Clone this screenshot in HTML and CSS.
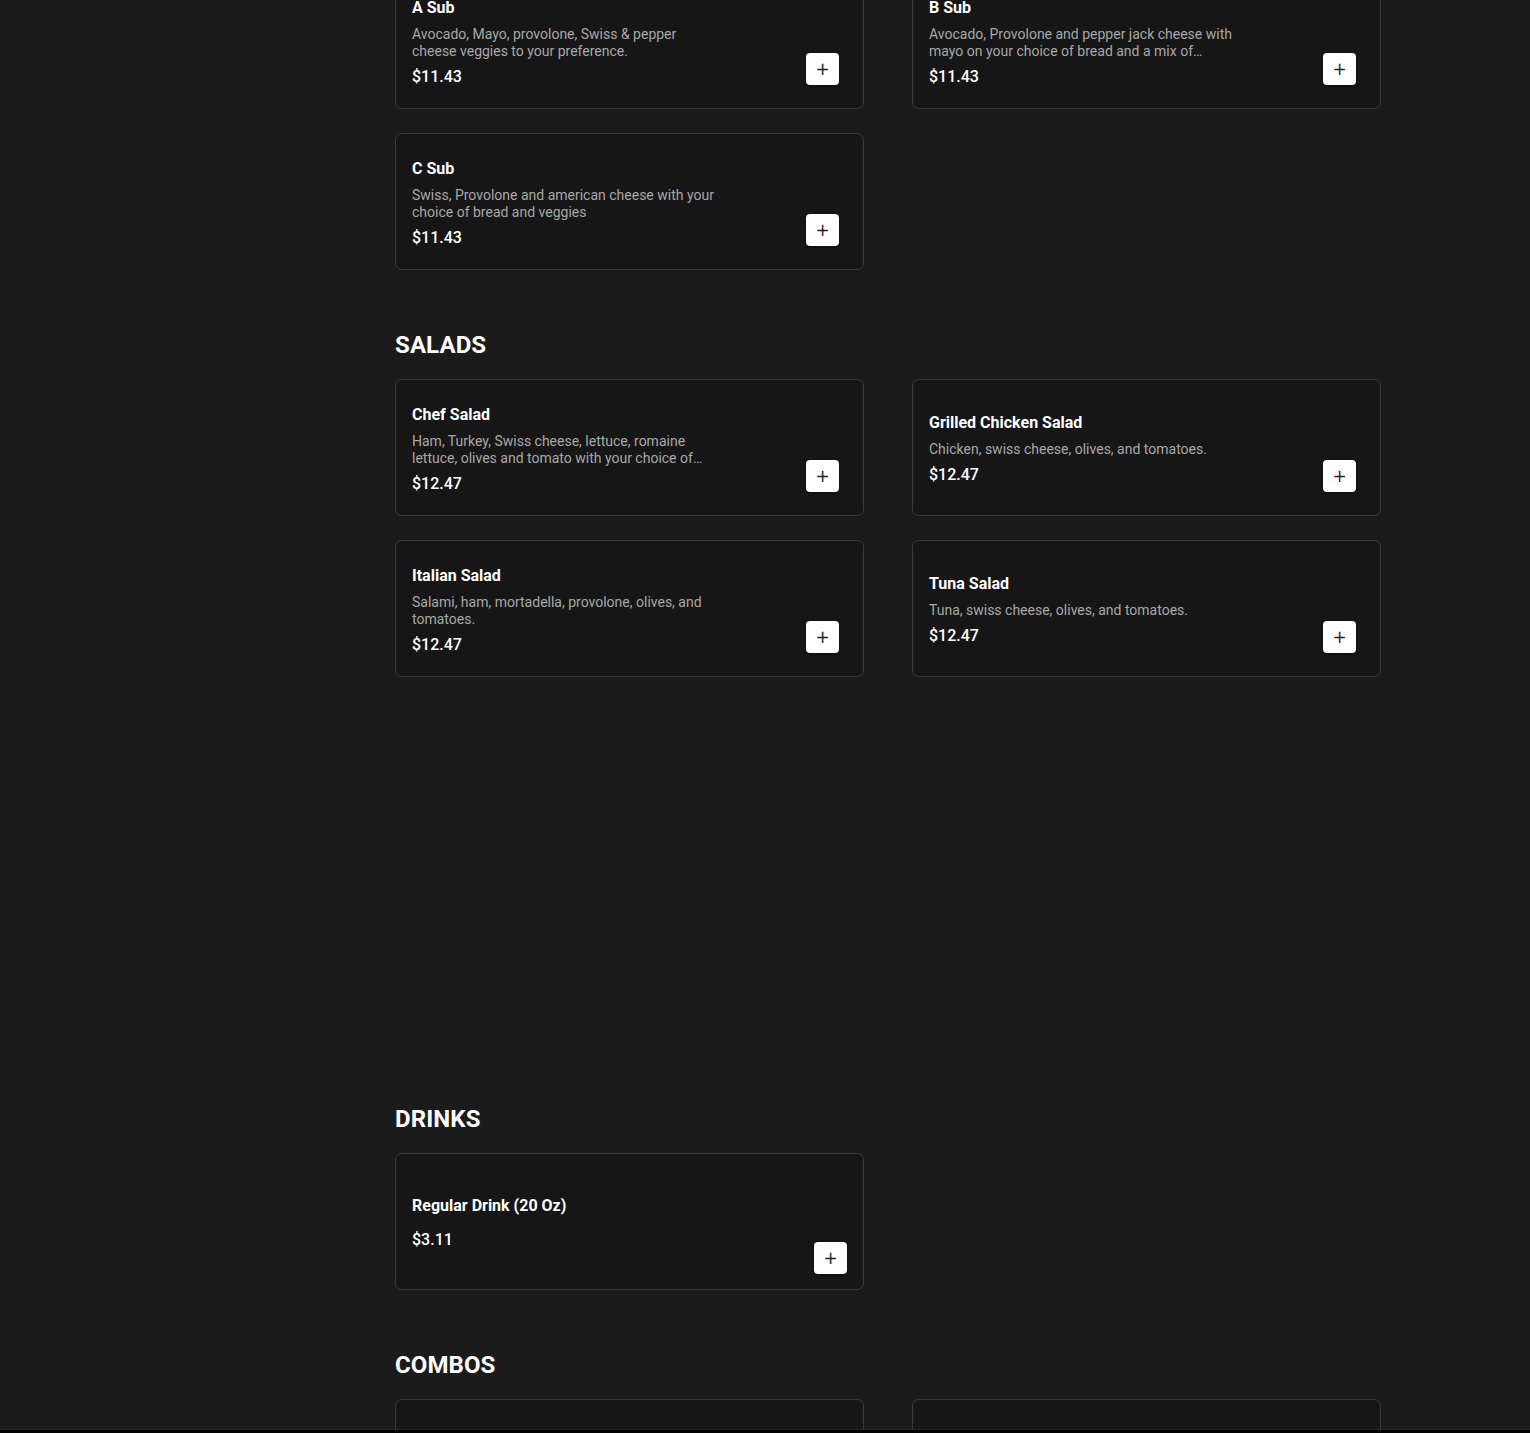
FILE: index.html
```html
<!DOCTYPE html>
<html lang="en">
<head>
    <meta charset="UTF-8">
    <meta name="viewport" content="width=device-width, initial-scale=1.0">
    <title>Menu</title>
    <link rel="stylesheet" href="styles.css">
</head>
<body>
    <main class="menu">
        <section class="category">
            <div class="items">
                <div class="item">
                    <div class="item-info">
                        <h3>A Sub</h3>
                        <p class="desc">Avocado, Mayo, provolone, Swiss &amp; pepper cheese veggies to your preference.</p>
                        <div class="price">$11.43</div>
                    </div>
                    <button class="add-btn" aria-label="Add">+</button>
                </div>
                <div class="item">
                    <div class="item-info">
                        <h3>B Sub</h3>
                        <p class="desc">Avocado, Provolone and pepper jack cheese with mayo on your choice of bread and a mix of veggies to your preference.</p>
                        <div class="price">$11.43</div>
                    </div>
                    <button class="add-btn" aria-label="Add">+</button>
                </div>
                <div class="item">
                    <div class="item-info">
                        <h3>C Sub</h3>
                        <p class="desc">Swiss, Provolone and american cheese with your choice of bread and veggies</p>
                        <div class="price">$11.43</div>
                    </div>
                    <button class="add-btn" aria-label="Add">+</button>
                </div>
            </div>
        </section>

        <section class="category">
            <h2>SALADS</h2>
            <div class="items">
                <div class="item">
                    <div class="item-info">
                        <h3>Chef Salad</h3>
                        <p class="desc">Ham, Turkey, Swiss cheese, lettuce, romaine lettuce, olives and tomato with your choice of dressing.</p>
                        <div class="price">$12.47</div>
                    </div>
                    <button class="add-btn" aria-label="Add">+</button>
                </div>
                <div class="item">
                    <div class="item-info">
                        <h3>Grilled Chicken Salad</h3>
                        <p class="desc">Chicken, swiss cheese, olives, and tomatoes.</p>
                        <div class="price">$12.47</div>
                    </div>
                    <button class="add-btn" aria-label="Add">+</button>
                </div>
                <div class="item">
                    <div class="item-info">
                        <h3>Italian Salad</h3>
                        <p class="desc">Salami, ham, mortadella, provolone, olives, and tomatoes.</p>
                        <div class="price">$12.47</div>
                    </div>
                    <button class="add-btn" aria-label="Add">+</button>
                </div>
                <div class="item">
                    <div class="item-info">
                        <h3>Tuna Salad</h3>
                        <p class="desc">Tuna, swiss cheese, olives, and tomatoes.</p>
                        <div class="price">$12.47</div>
                    </div>
                    <button class="add-btn" aria-label="Add">+</button>
                </div>
            </div>
        </section>

        <!-- пустая категория -->
        <section class="category category-empty"></section>

        <section class="category">
            <h2>DRINKS</h2>
            <div class="items">
                <div class="item item-simple">
                    <div class="item-info">
                        <h3>Regular Drink (20 Oz)</h3>
                        <div class="price">$3.11</div>
                    </div>
                    <button class="add-btn" aria-label="Add">+</button>
                </div>
            </div>
        </section>

        <section class="category">
            <h2>COMBOS</h2>
            <div class="items">
                <div class="item"></div>
                <div class="item"></div>
            </div>
        </section>
    </main>

    <div class="bottom-bar"></div>
</body>
</html>
```

FILE: styles.css
```css
body {
    font-family: Roboto, "Noto Sans", Arial, sans-serif;
    background-color: #1b1b1b;
    color: #ffffff;
    margin: 0;
}

.menu {
    width: 986px;
    margin: -28px 0 0 395px;
}

.category {
    margin-bottom: 61px;
}

.category-empty {
    height: 306px;
}

h2 {
    font-size: 24px;
    font-weight: 700;
    line-height: 29px;
    margin: 0 0 19px;
    letter-spacing: 0.1px;
}

.items {
    display: grid;
    grid-template-columns: 469px 469px;
    column-gap: 48px;
    row-gap: 24px;
}

.item {
    position: relative;
    height: 137px;
    box-sizing: border-box;
    background-color: #161616;
    border: 1px solid #3a3a3a;
    border-radius: 7px;
    padding: 25px 24px 23px 16px;
    display: flex;
    justify-content: space-between;
    align-items: center;
}

.item-info {
    width: 306px;
}

    .item-info h3 {
        font-size: 16px;
        font-weight: 700;
        line-height: 19px;
        margin: 0 0 9px;
    }

.desc {
    font-size: 14px;
    line-height: 17px;
    color: #a8a8a8;
    margin: 0 0 7px;
    display: -webkit-box;
    -webkit-line-clamp: 2;
    -webkit-box-orient: vertical;
    overflow: hidden;
}

.price {
    font-size: 16px;
    font-weight: 500;
    line-height: 19px;
}

.add-btn {
    align-self: flex-end;
    width: 33px;
    height: 32px;
    border: none;
    border-radius: 4px;
    background-color: #ffffff;
    color: #222222;
    font-family: "DejaVu Sans", sans-serif;
    font-size: 17px;
    line-height: 32px;
    padding: 0;
    cursor: pointer;
    box-shadow: 0 1px 3px rgba(0, 0, 0, 0.4);
}

.item-simple {
    padding-top: 24px;
}

    .item-simple .item-info h3 {
        margin-bottom: 15px;
    }

    .item-simple .add-btn {
        position: absolute;
        right: 16px;
        bottom: 15px;
    }

.bottom-bar {
    position: fixed;
    left: 0;
    right: 0;
    bottom: 0;
    height: 3px;
    background-color: #000000;
    border-top: 1px solid #242424;
}
```
